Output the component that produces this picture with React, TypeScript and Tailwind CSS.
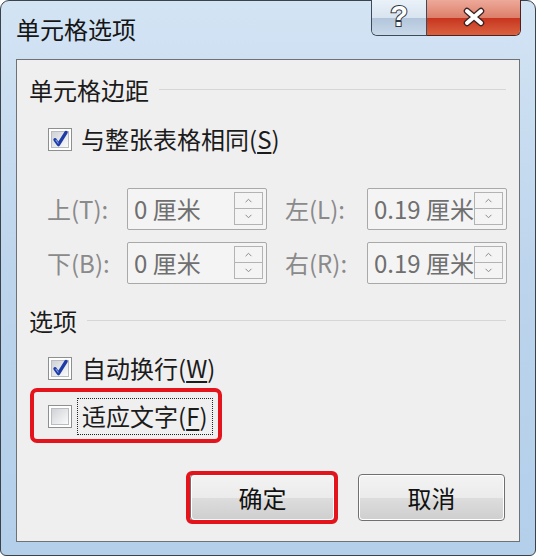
import React from "react";

const font = "font-['Microsoft_YaHei','Noto_Sans_CJK_SC','Noto_Sans',sans-serif]";

const Checkbox = ({ checked }: { checked?: boolean }) => (
  <div className="w-[24px] h-[23px] border border-[#8e8f8f] bg-white p-[2px] shrink-0">
    <div className="relative w-full h-full border border-[#b9bcc0] bg-gradient-to-br from-[#cfd2d6] to-[#fbfbfb]">
      {checked && (
        <svg viewBox="0 0 16 16" className="absolute left-[-1px] top-[-2px] w-[18px] h-[18px]">
          <path d="M3.6 8.6 L6.6 13 L13.4 2.2" fill="none" stroke="#1d3ca8" strokeWidth="3" strokeLinejoin="round" strokeLinecap="round" />
          <path d="M4.2 8.8 L6.6 12" fill="none" stroke="#8aa2e6" strokeWidth="0.9" />
        </svg>
      )}
    </div>
  </div>
);

const GroupHeader = ({ label }: { label: string }) => (
  <div className="flex items-center h-[26px] pl-[12px] pr-[13px]">
    <span className="text-[24px] leading-none text-[#1b1b1b]">{label}</span>
    <div className="flex-1 ml-[10px] h-[2px] border-t border-[#d6d6d6] border-b-white" />
  </div>
);

const SpinField = ({ value }: { value: string }) => (
  <div className="relative w-[140px] h-[42px] border border-[#a9a9a9] rounded-[2px] bg-[#f4f4f4] flex items-center overflow-hidden">
    <span className="pl-[6px] text-[24px] leading-none text-[#6f6f6f] whitespace-nowrap">{value}</span>
    <div className="absolute right-[3px] top-[3px] bottom-[4px] w-[29px] flex flex-col bg-[#f4f4f4]">
      <div className="flex-1 border border-[#b3b3b3] flex items-center justify-center">
        <svg viewBox="0 0 10 6" className="w-[9px] h-[5px]">
          <path d="M1.5 5 L5 1.5 L8.5 5" fill="none" stroke="#8a8a8a" strokeWidth="1.2" />
        </svg>
      </div>
      <div className="flex-1 border border-t-0 border-[#b3b3b3] flex items-center justify-center">
        <svg viewBox="0 0 10 6" className="w-[9px] h-[5px]">
          <path d="M1.5 1 L5 4.5 L8.5 1" fill="none" stroke="#8a8a8a" strokeWidth="1.2" />
        </svg>
      </div>
    </div>
  </div>
);

const DialogButton = ({ label, width }: { label: string; width: string }) => (
  <div className={`${width} h-[47px] rounded-[4px] border border-[#707070] p-[1px] bg-white`}>
    <div className="w-full h-full rounded-[3px] flex flex-col overflow-hidden relative">
      <div className="flex-1 bg-gradient-to-b from-[#f3f3f3] to-[#ebebeb]" />
      <div className="flex-1 bg-gradient-to-b from-[#dddddd] to-[#cfcfcf]" />
      <span className="absolute inset-0 flex items-center justify-center text-[24px] leading-none text-[#111]">{label}</span>
    </div>
  </div>
);

export default function App() {
  return (
    <div className={`w-[536px] h-[558px] bg-white ${font}`}>
      <div className="w-[536px] h-[556px] rounded-t-[9px] rounded-b-[6px] border border-[#3c4249] bg-gradient-to-b from-[#d3e4f4] via-[#bcd4ec] to-[#b3cfea] flex flex-col px-[15px] pb-[13px]">
        <div className="h-[58px] flex items-start shrink-0">
          <div className="pt-[15px] text-[24px] leading-[26px] text-[#151515] flex-1">单元格选项</div>
          <div className="flex mt-[-1px] mr-[-1px]">
            <div className="w-[56px] h-[36px] border border-t-0 border-[#3d4a5a] rounded-bl-[6px] overflow-hidden flex flex-col relative">
              <div className="flex-1 bg-gradient-to-b from-[#eaf1f8] to-[#d8e4f0]" />
              <div className="flex-1 bg-gradient-to-b from-[#b2c5da] to-[#c9d9ea]" />
              <span className="absolute inset-0 pb-[2px] flex items-center justify-center text-[29px] font-bold leading-none text-white [-webkit-text-stroke:2px_#2f3640] [paint-order:stroke_fill] font-['Liberation_Sans',sans-serif]">?</span>
            </div>
            <div className="w-[94px] h-[36px] border border-t-0 border-l-0 border-[#4b2320] rounded-br-[6px] overflow-hidden flex flex-col relative">
              <div className="flex-1 bg-gradient-to-b from-[#eda999] to-[#dc7e6a]" />
              <div className="flex-1 bg-gradient-to-b from-[#c7331e] to-[#d9613f]" />
              <svg viewBox="0 0 30 20" className="absolute left-[32px] top-[7px] w-[30px] h-[20px]">
                <path d="M8 4 L22 16 M22 4 L8 16" stroke="#3a2222" strokeWidth="6.5" strokeLinecap="round" />
                <path d="M8 4 L22 16 M22 4 L8 16" stroke="#ffffff" strokeWidth="4" strokeLinecap="round" />
              </svg>
            </div>
          </div>
        </div>

        <div className="flex-1 border border-[#6e7176] bg-[#f0eff0] pt-[17px] flex flex-col">
          <GroupHeader label="单元格边距" />

          <div className="mt-[21px] h-[30px] pl-[31px] flex items-center gap-[9px]">
            <Checkbox checked />
            <span className="text-[24px] leading-none text-[#1b1b1b]">
              与整张表格相同(<span className="underline underline-offset-[3px]">S</span>)
            </span>
          </div>

          <div className="mt-[34px] pl-[30px] flex flex-col gap-[12px]">
            {[
              ["上(T):", "0 厘米", "左(L):", "0.19 厘米"],
              ["下(B):", "0 厘米", "右(R):", "0.19 厘米"],
            ].map((row) => (
              <div key={row[0]} className="flex items-center">
                <span className="w-[80px] text-[24px] leading-none text-[#8a8a8a]">{row[0]}</span>
                <SpinField value={row[1]} />
                <span className="ml-[18px] w-[82px] text-[24px] leading-none text-[#8a8a8a]">{row[2]}</span>
                <SpinField value={row[3]} />
              </div>
            ))}
          </div>

          <div className="mt-[24px]">
            <GroupHeader label="选项" />
          </div>

          <div className="mt-[19px] h-[30px] pl-[31px] flex items-center gap-[10px]">
            <Checkbox checked />
            <span className="text-[24px] leading-none text-[#1b1b1b]">
              自动换行(<span className="underline underline-offset-[3px]">W</span>)
            </span>
          </div>

          <div className="mt-[18px] h-[30px] pl-[31px] flex items-center gap-[5px] relative">
            <Checkbox />
            <span className="h-[37px] px-[4px] flex items-center border border-dotted border-[#222] text-[24px] leading-none text-[#1b1b1b]">
              适应文字(<span className="underline underline-offset-[3px]">F</span>)
            </span>
            <div className="absolute left-[13px] top-[-13px] w-[192px] h-[55px] border-[4px] border-[#e3141c] rounded-[7px]" />
          </div>

          <div className="mt-[43px] flex justify-end gap-[23px] pr-[14px]">
            <div className="relative">
              <DialogButton label="确定" width="w-[145px]" />
              <div className="absolute left-[-4px] top-[-3px] right-[-3px] bottom-[-3px] border-[4px] border-[#e3141c] rounded-[6px]" />
            </div>
            <DialogButton label="取消" width="w-[147px]" />
          </div>
        </div>
      </div>
    </div>
  );
}
